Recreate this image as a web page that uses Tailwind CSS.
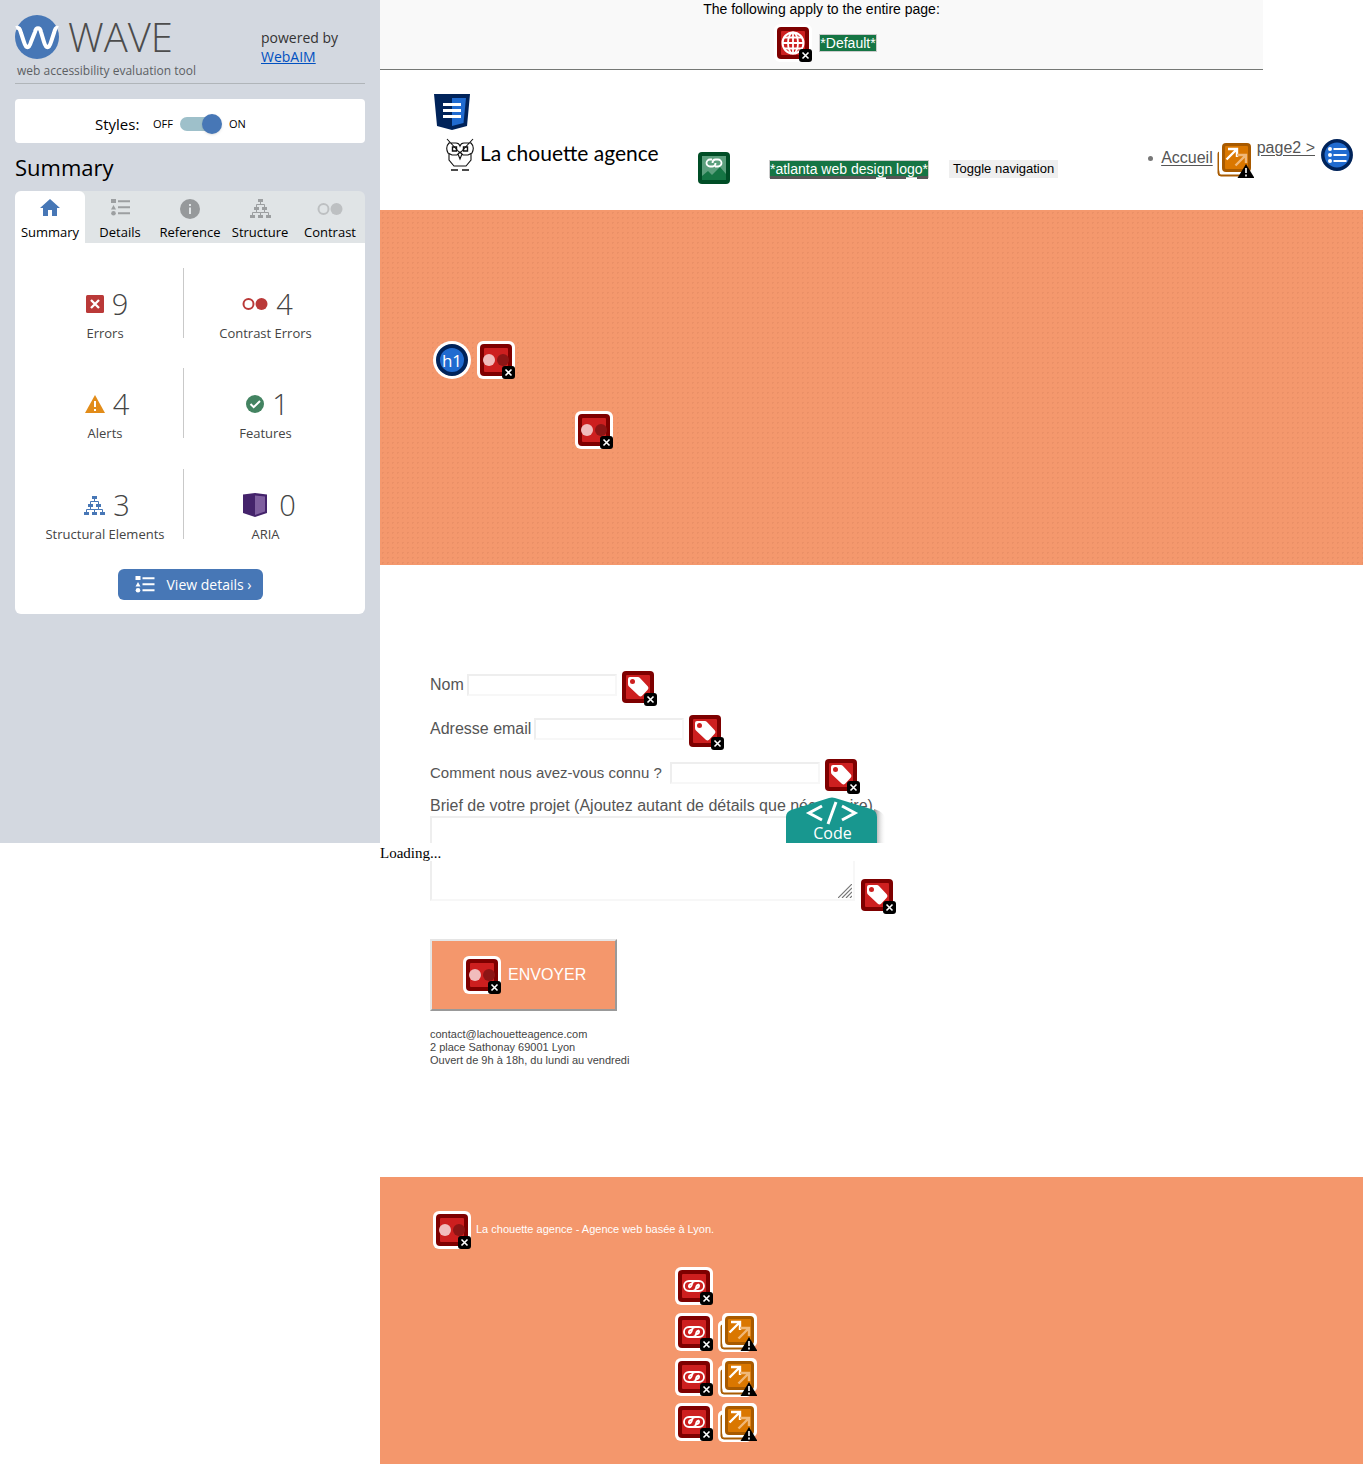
<!DOCTYPE html>
<html lang="fr">
<head>
<meta charset="utf-8">
<title>WAVE - La chouette agence</title>
<script src="https://cdn.jsdelivr.net/npm/@tailwindcss/browser@4"></script>
</head>
<body class="bg-white font-['Liberation_Sans',Arial,sans-serif] text-black">
<svg class="hidden" aria-hidden="true">
  <defs>
    <symbol id="badge" viewBox="0 0 13 13"><rect width="13" height="13" rx="3"/><path d="M3.500 3.500l6 6M9.500 3.500l-6 6" stroke="#fff" stroke-width="1.600"/></symbol>
    <symbol id="frame" viewBox="0 0 38 38"><rect width="38" height="38" rx="6" fill="#fff"/><rect x="3" y="3" width="32" height="32" rx="4" fill="#7e0000"/><rect x="7" y="7" width="24" height="24" rx="1" fill="#cd1f1f"/></symbol>
    <symbol id="contrast" viewBox="0 0 38 38"><use href="#frame"/><circle cx="12" cy="19" r="6" fill="#f1bcbc"/><circle cx="26" cy="19" r="6" fill="#8c1515"/><use href="#badge" x="25" y="25" width="13" height="13"/></symbol>
    <symbol id="tag" viewBox="0 0 38 38"><use href="#frame"/><path d="M11 9h8q1 0 1.700.7l8 8.500q1.600 1.800 0 3.500l-5.600 6q-1.600 1.400-3.300 0L10 18.500Q9 17.500 9 16v-5q0-2 2-2z" fill="#fff"/><circle cx="13.500" cy="13.500" r="2.500" fill="#cd1f1f"/><use href="#badge" x="25" y="25" width="13" height="13"/></symbol>
    <symbol id="chain" viewBox="0 0 22 12"><g fill="none" stroke="#fff" stroke-width="1.800"><path d="M13 1H6a5 5 0 0 0 0 10h3.500q3 0 3.500-3t3-3.500"/><path d="M9 11h7a5 5 0 0 0 0-10h-3.500q-3 0-3.500 3t-3 3.500"/><path d="M9 4H7.500Q5.500 4.500 6 7.500M13 8h1.500q2-.5 1.500-3.500"/></g></symbol>
    <symbol id="brokenlink" viewBox="0 0 38 38"><use href="#frame"/><use href="#chain" x="8" y="13" width="22" height="12"/><use href="#badge" x="25" y="25" width="13" height="13"/></symbol>
    <symbol id="globe" viewBox="0 0 38 38"><use href="#frame"/><g fill="none" stroke="#fff" stroke-width="1.800"><circle cx="19" cy="19" r="10.500" stroke-width="2"/><ellipse cx="19" cy="19" rx="5" ry="10.500"/><path d="M19 8v22M8 19h22M10 13.500h18M10 24.500h18"/></g><use href="#badge" x="25" y="25" width="13" height="13"/></symbol>
    <symbol id="redundant" viewBox="0 0 39 39"><rect y="7.500" width="34" height="31.500" rx="5" fill="#fff"/><path d="M4 12v21q0 2 2 2h22v1H6q-3 0-3-3V14q0-2 1-2z" fill="#a85a00" stroke="#a85a00"/><rect x="4" width="35" height="34" rx="5" fill="#fff"/><rect x="7" y="3" width="29" height="29" rx="4" fill="#a85a00"/><rect x="10" y="6" width="23" height="23" rx="1" fill="#da7700"/><g fill="none" stroke-width="2.400"><path d="M11.500 19.500l10-10M13 9h9v8" stroke="#fff"/><path d="M20.500 25.500l10-10M22 15h9v8" stroke="#f0b878"/></g><path d="M31 24l8.500 14h-17z"/><path d="M31 28v5M31 34.500v2" stroke="#fff" stroke-width="1.600"/></symbol>
    <symbol id="tree" viewBox="0 0 21 19"><path d="M8 0h5v3H8zM4 8h5v3H4zM12 8h5v3h-5zM0 16h5v3H0zM8 16h5v3H8zM16 16h5v3h-5z" fill="currentColor"/><path d="M10.500 3v2.500M6.500 8V5.500h8V8M2.500 16v-2.500h4V11v2.500h4V16v-2.500h4V11v2.500h4V16" fill="none" stroke="currentColor"/></symbol>
    <symbol id="list" viewBox="0 0 19 17"><path d="M0 0h5v4H0zM2.500 6L5 10.500H0zM7 1.200h12v2H7zM7 7.200h12v2H7zM7 13.200h12v2H7z" fill="currentColor"/><circle cx="2.500" cy="14.200" r="2.300" fill="currentColor"/></symbol>
    <symbol id="circles" viewBox="0 0 26 14"><circle cx="6.500" cy="7" r="5" fill="none" stroke="currentColor" stroke-width="2"/><circle cx="19.500" cy="7" r="6" fill="currentColor"/></symbol>
  </defs>
</svg>

<div class="flex min-h-screen items-start">
  <aside class="h-[843px] w-[380px] shrink-0 bg-[#d3d8e0] px-[15px] font-['Open_Sans','Noto_Sans',sans-serif]">
    <header class="flex h-[84px] items-start justify-between border-b border-[#b0b5b9] pt-[14px]">
      <div>
        <div class="flex h-[46px] items-center gap-[9px]">
          <svg class="size-[44px]" viewBox="0 0 44 44" role="img" aria-label="WAVE"><circle cx="22" cy="22" r="22" fill="#4777b6"/><path d="M1 13c3-1 4 1 5 5l3 9c2 7 5 7 7 0l4-10c1-5 5-5 6 0l3 10c2 7 5 7 7 0l3-9c1-4 2-6 4-5" fill="none" stroke="#fff" stroke-width="4"/></svg>
          <span class="text-[40px] leading-[46px] font-light text-[#4c4c4c]">WAVE</span>
        </div>
        <p class="pl-0.5 pt-0.5 text-xs leading-[18px] text-[#5c5f63]">web accessibility evaluation tool</p>
      </div>
      <p class="w-[104px] pt-[14px] text-sm leading-[19px] text-[#333]">powered by<br><a href="#" class="text-[#0050c0] underline">WebAIM</a></p>
    </header>
    <div class="mt-[15px] flex h-11 items-center rounded bg-white pt-1.5 pl-20">
      <span class="w-[58px] text-[15px]">Styles:</span>
      <label class="flex items-center gap-[7px] text-[11px]"><span>OFF</span>
        <span class="relative flex h-5 w-[42px] items-center"><input type="checkbox" checked class="h-3.5 w-9 appearance-none rounded-full bg-[#9ec0ca]" aria-label="Styles"><span class="absolute right-0 size-5 rounded-full bg-[#4777b6] shadow"></span></span>
        <span>ON</span></label>
    </div>
    <h1 class="pt-2 text-[22px] leading-8">Summary</h1>
    <nav class="mt-2 grid h-[52px] grid-cols-5 rounded-t-md bg-[#e0e4e6] text-center text-[13px] leading-4">
      <button class="flex flex-col items-center rounded-t-md bg-white pt-2"><svg class="mb-2 h-[17px] w-5" viewBox="0 0 20 17"><path d="M10 0l10 9h-3v8h-5v-6H8v6H3V9H0z" fill="#4777b6"/></svg><span>Summary</span></button>
      <button class="flex flex-col items-center pt-2"><svg class="mb-2 h-[17px] w-[19px] text-[#9c9fa1]"><use href="#list"/></svg><span>Details</span></button>
      <button class="flex flex-col items-center pt-2"><svg class="mb-[5px] size-5" viewBox="0 0 20 20"><circle cx="10" cy="10" r="10" fill="#96999b"/><path d="M9 5h2v2H9zM9 8.500h2V15H9z" fill="#e0e4e6"/></svg><span>Reference</span></button>
      <button class="flex flex-col items-center pt-2"><svg class="mb-1.5 h-[19px] w-[21px] text-[#9c9fa1]"><use href="#tree"/></svg><span>Structure</span></button>
      <button class="flex flex-col items-center pt-[11px]"><svg class="mb-2 h-3.5 w-[26px] text-[#bdc0c2]"><use href="#circles"/></svg><span>Contrast</span></button>
    </nav>
    <section class="h-[371px] rounded-b-md bg-white pt-[25px] text-center text-[13px] leading-[18px] text-[#444]">
      <div class="flex">
        <div class="flex h-[70px] w-[169px] flex-col items-center border-r border-[#c9c9c9] pt-4 pl-3"><div class="flex h-10 shrink-0 items-center gap-2 pl-1 text-[29px]"><svg class="size-[18px]" viewBox="0 0 18 18"><rect width="18" height="18" rx="1.500" fill="#ba3938"/><path d="M5 5l8 8M13 5l-8 8" stroke="#fff" stroke-width="2.300"/></svg><b class="font-light">9</b></div><span>Errors</span></div>
        <div class="flex h-[70px] flex-1 flex-col items-center pt-4 pr-[18px]"><div class="flex h-10 shrink-0 items-center gap-2 pl-1 text-[29px]"><svg class="h-3.5 w-[26px] text-[#ba3938]"><use href="#circles"/></svg><b class="font-light">4</b></div><span>Contrast Errors</span></div>
      </div>
      <div class="mt-[30px] flex">
        <div class="flex h-[70px] w-[169px] flex-col items-center border-r border-[#c9c9c9] pt-4 pl-3"><div class="flex h-10 shrink-0 items-center gap-2 pl-1 text-[29px]"><svg class="h-[18px] w-5" viewBox="0 0 20 18"><path d="M10 0l10 18H0z" fill="#e28c19"/><path d="M10 6v6M10 14v2" stroke="#fff" stroke-width="2"/></svg><b class="font-light">4</b></div><span>Alerts</span></div>
        <div class="flex h-[70px] flex-1 flex-col items-center pt-4 pr-[18px]"><div class="flex h-10 shrink-0 items-center gap-2 pl-1 text-[29px]"><svg class="size-[18px]" viewBox="0 0 18 18"><circle cx="9" cy="9" r="9" fill="#438361"/><path d="M4.500 9l3.200 3.200L14 6" fill="none" stroke="#fff" stroke-width="2"/></svg><b class="font-light">1</b></div><span>Features</span></div>
      </div>
      <div class="mt-[31px] flex">
        <div class="flex h-[70px] w-[169px] flex-col items-center border-r border-[#c9c9c9] pt-4 pl-3"><div class="flex h-10 shrink-0 items-center gap-2 pl-1 text-[29px]"><svg class="h-[19px] w-[21px] text-[#4777b6]"><use href="#tree"/></svg><b class="font-light">3</b></div><span>Structural Elements</span></div>
        <div class="flex h-[70px] flex-1 flex-col items-center pt-4 pr-[18px]"><div class="flex h-10 shrink-0 items-center gap-3 pl-2 text-[29px]"><svg class="h-6 w-6" viewBox="0 0 24 24"><path d="M0 1.500L12 0l12 1.500V20l-12 4L0 20z" fill="#44236b"/><path d="M12 2.500l10 1v15L12 22z" fill="#7f5f9f"/></svg><b class="font-light">0</b></div><span>ARIA</span></div>
      </div>
      <button class="mx-auto mt-[30px] flex h-[31px] w-[145px] items-center gap-3 rounded-md bg-[#4777b6] pl-[17px] text-sm text-white"><svg class="h-[17px] w-5"><use href="#list"/></svg><span>View details ›</span></button>
    </section>
  </aside>

  <main class="relative min-w-0 flex-1 text-[#555]">
    <div class="mr-[100px] h-[70px] border-b border-[#757875] bg-[#f9f9f9] text-center text-black">
      <p class="text-sm leading-[18px]">The following apply to the entire page:</p>
      <div class="mt-1.5 flex items-center justify-center gap-[7px] pl-2"><svg class="size-[38px]"><use href="#globe"/></svg><span class="border border-[#ccc] bg-[#157544] text-sm leading-4 text-white">*Default*</span></div>
    </div>
    <header class="h-[140px] pt-6 pr-[10px] pl-[54px]">
      <svg class="h-9 w-9" viewBox="0 0 36 36"><path d="M0 0h36l-3 32-15 4-15-4z" fill="#00235a"/><path d="M18 4h14l-2.500 25L18 32z" fill="#206bd0"/><path d="M9 10.500h18M9 16.500h18M9 22.500h18" stroke="#fff" stroke-width="3"/></svg>
      <div class="flex items-start">
        <a href="#" class="mt-2 ml-3 flex h-[34px] w-[252px] items-center gap-1.5 text-black">
          <svg class="h-[34px] w-7" viewBox="0 0 28 34" fill="none" stroke="#111" stroke-width="1.100"><path d="M1 1l13 14L27 1M3 5Q-1 9 2 15l4 2h5l3-3 3 3h5l4-2q3-6-1-10h-7q-3 0-4 3-1-3-4-3zM3 15v7l5 6h12l5-6v-7M12 16l2 5 2-5"/><path d="M6.500 9h4v4h-4zM17.500 9h4v4h-4z" stroke-width="1.400"/><path d="M5 32h7M16 32h7" stroke-width="1.500"/></svg>
          <span class="pb-1 font-['Lato',sans-serif] text-[21px] leading-[30px] whitespace-nowrap">La chouette agence</span>
        </a>
        <svg class="mt-[22px] size-8" viewBox="0 0 32 32"><rect width="32" height="32" rx="4" fill="#004d26"/><rect x="4" y="4" width="24" height="24" fill="#5c9f7d"/><path d="M4 24l6-5 4 4 8-8 6 7v6H4z" fill="#157544"/><g fill="none" stroke="#fff" stroke-width="1.800"><path d="M14 7.500h-2a3.500 3.500 0 0 0 0 7h2.500q3 0 3-3.500"/><path d="M17 14.500h3a3.500 3.500 0 0 0 0-7h-2.500q-3 0-3 3.500"/></g></svg>
        <a href="#" class="mt-[30px] ml-[39px] border border-[#ccc] bg-[#157544] text-sm leading-4 whitespace-nowrap text-white underline decoration-[#555] decoration-[3px]">*atlanta web design logo*</a>
        <button class="mt-[30px] ml-5 h-[18px] bg-[#efefef] px-1 text-[13px] leading-[18px] whitespace-nowrap text-black">Toggle navigation</button>
        <nav class="ml-auto flex items-start text-base leading-5 whitespace-nowrap">
          <span class="mt-[26px] mr-2 size-[5px] rounded-sm bg-[#777]"></span>
          <a href="#" class="mt-[18px] underline underline-offset-2">Accueil</a>
          <svg class="mt-[10px] ml-[2px] size-[39px]"><use href="#redundant"/></svg>
          <a href="#" class="mt-2 ml-[3px] underline underline-offset-2">page2 &gt;</a>
          <svg class="mt-[9px] ml-1.5 size-8" viewBox="0 0 32 32"><circle cx="16" cy="16" r="14.200" fill="#206bd0" stroke="#00235a" stroke-width="3.500"/><path d="M12.500 10h13M12.500 16h13M12.500 22h13" stroke="#fff" stroke-width="2.200"/><g fill="#fff"><circle cx="9" cy="10" r="2"/><circle cx="9" cy="16" r="2"/><circle cx="9" cy="22" r="2"/></g></svg>
        </nav>
      </div>
    </header>
    <section class="h-[355px] bg-[#f4986d] bg-[radial-gradient(circle_at_center,#ea9067_1px,transparent_1px)] bg-[length:5px_5px] pt-[131px] pl-[53px]">
      <h1 class="flex gap-1.5">
        <svg class="size-[38px]" viewBox="0 0 38 38"><circle cx="19" cy="19" r="19" fill="#fff"/><circle cx="19" cy="19" r="14" fill="#206bd0" stroke="#00235a" stroke-width="4"/><text x="19" y="25.500" text-anchor="middle" font-size="17" fill="#fff" font-family="Open Sans">h1</text></svg>
        <svg class="size-[38px]"><use href="#contrast"/></svg>
      </h1>
      <svg class="mt-8 ml-[142px] size-[38px]"><use href="#contrast"/></svg>
    </section>
    <form class="pt-[103px] pl-[50px] text-base leading-5" onsubmit="return false">
      <div class="flex h-11 items-start"><label for="nom" class="mt-[7px] mr-[3px]">Nom</label><input id="nom" class="mt-1.5 mr-0.5 h-[22px] w-[150px] border-2 border-[#f7f7f7] border-t-[#eee] border-l-[#eee]"><svg class="size-[38px]"><use href="#tag"/></svg></div>
      <div class="flex h-11 items-start"><label for="mail" class="mt-[7px] mr-[3px]">Adresse email</label><input id="mail" type="email" class="mt-1.5 mr-0.5 h-[22px] w-[150px] border-2 border-[#f7f7f7] border-t-[#eee] border-l-[#eee]"><svg class="size-[38px]"><use href="#tag"/></svg></div>
      <div class="flex h-[39px] items-start"><label for="connu" class="mt-[7px] w-60 text-[15px] whitespace-nowrap">Comment nous avez-vous connu ?</label><input id="connu" class="mt-1.5 mr-0.5 h-[22px] w-[150px] border-2 border-[#f7f7f7] border-t-[#eee] border-l-[#eee]"><svg class="size-[38px]"><use href="#tag"/></svg></div>
      <label for="brief" class="block h-[21px] pt-px">Brief de votre projet (Ajoutez autant de détails que nécessaire)</label>
      <div class="flex items-end">
        <div class="relative mr-[3px] mb-[13px] h-[85px] w-[425px]">
          <textarea id="brief" class="block size-full resize-none border-2 border-[#f7f7f7] border-t-[#eee] border-l-[#eee]"></textarea>
          <svg class="absolute right-[3px] bottom-[3px] size-3.5" viewBox="0 0 14 14" stroke="#777" stroke-width="1.200"><path d="M0 14L14 0M4 14L14 4M8 14l6-6M12 14l2-2"/></svg>
        </div>
        <svg class="size-[38px]"><use href="#tag"/></svg>
      </div>
      <button class="mt-[25px] flex h-[72px] w-[187px] items-center gap-[7px] border-2 border-[#999] border-t-[#e5e5e5] border-l-[#e5e5e5] bg-[#f4976c] pl-[31px] text-base text-white"><svg class="size-[38px]"><use href="#contrast"/></svg><span>ENVOYER</span></button>
    </form>
    <address class="mt-[17px] h-[149px] pl-[50px] text-[11px] leading-[13px] text-[#444] not-italic">contact@lachouetteagence.com<br>2 place Sathonay 69001 Lyon<br>Ouvert de 9h à 18h, du lundi au vendredi</address>
    <footer class="bg-[#f4976c] pt-[34px] pb-[23px] pl-[53px] text-[11px] text-white">
      <p class="flex gap-[5px] leading-9"><svg class="size-[38px]"><use href="#contrast"/></svg>La chouette agence - Agence web basée à Lyon.</p>
      <ul class="mt-[18px] grid gap-1.5 pl-[242px]">
        <li class="flex"><a href="#"><svg class="size-[38px]"><use href="#brokenlink"/></svg></a></li>
        <li class="mt-0.5 flex gap-[5px]"><a href="#"><svg class="size-[38px]"><use href="#brokenlink"/></svg></a><svg class="size-[39px]"><use href="#redundant"/></svg></li>
        <li class="flex gap-[5px]"><a href="#"><svg class="size-[38px]"><use href="#brokenlink"/></svg></a><svg class="size-[39px]"><use href="#redundant"/></svg></li>
        <li class="flex gap-[5px]"><a href="#"><svg class="size-[38px]"><use href="#brokenlink"/></svg></a><svg class="size-[39px]"><use href="#redundant"/></svg></li>
      </ul>
    </footer>

    <!-- Code panel tab and its loading strip float over the evaluated page -->
    <button class="absolute top-[797px] left-[406px] h-[46px] w-[100px] overflow-hidden text-left" aria-label="Code">
      <svg class="h-[46px] w-[100px]" viewBox="0 0 100 46"><defs><linearGradient id="shade"><stop offset="0" stop-color="#888"/><stop offset="1" stop-color="#fff" stop-opacity="0"/></linearGradient></defs><path d="M88 12q12 3 12 14v20H88z" fill="url(#shade)"/><path d="M0 46V20q0-5 5-7L43 1q3-1 6 0l36 11q6 2 6 8v26z" fill="#18978f"/><path d="M36 9l-13 7 13 7M56 9l13 7-13 7M50 5l-8 22" fill="none" stroke="#fff" stroke-width="3"/><text x="46.500" y="42" text-anchor="middle" font-size="16" fill="#fff" font-family="Open Sans">Code</text></svg>
    </button>
    <div class="absolute top-[843px] left-0 h-[18px] w-full bg-white font-['Liberation_Serif',serif] text-[15px] leading-5 text-black">Loading...</div>
  </main>
</div>
</body>
</html>
